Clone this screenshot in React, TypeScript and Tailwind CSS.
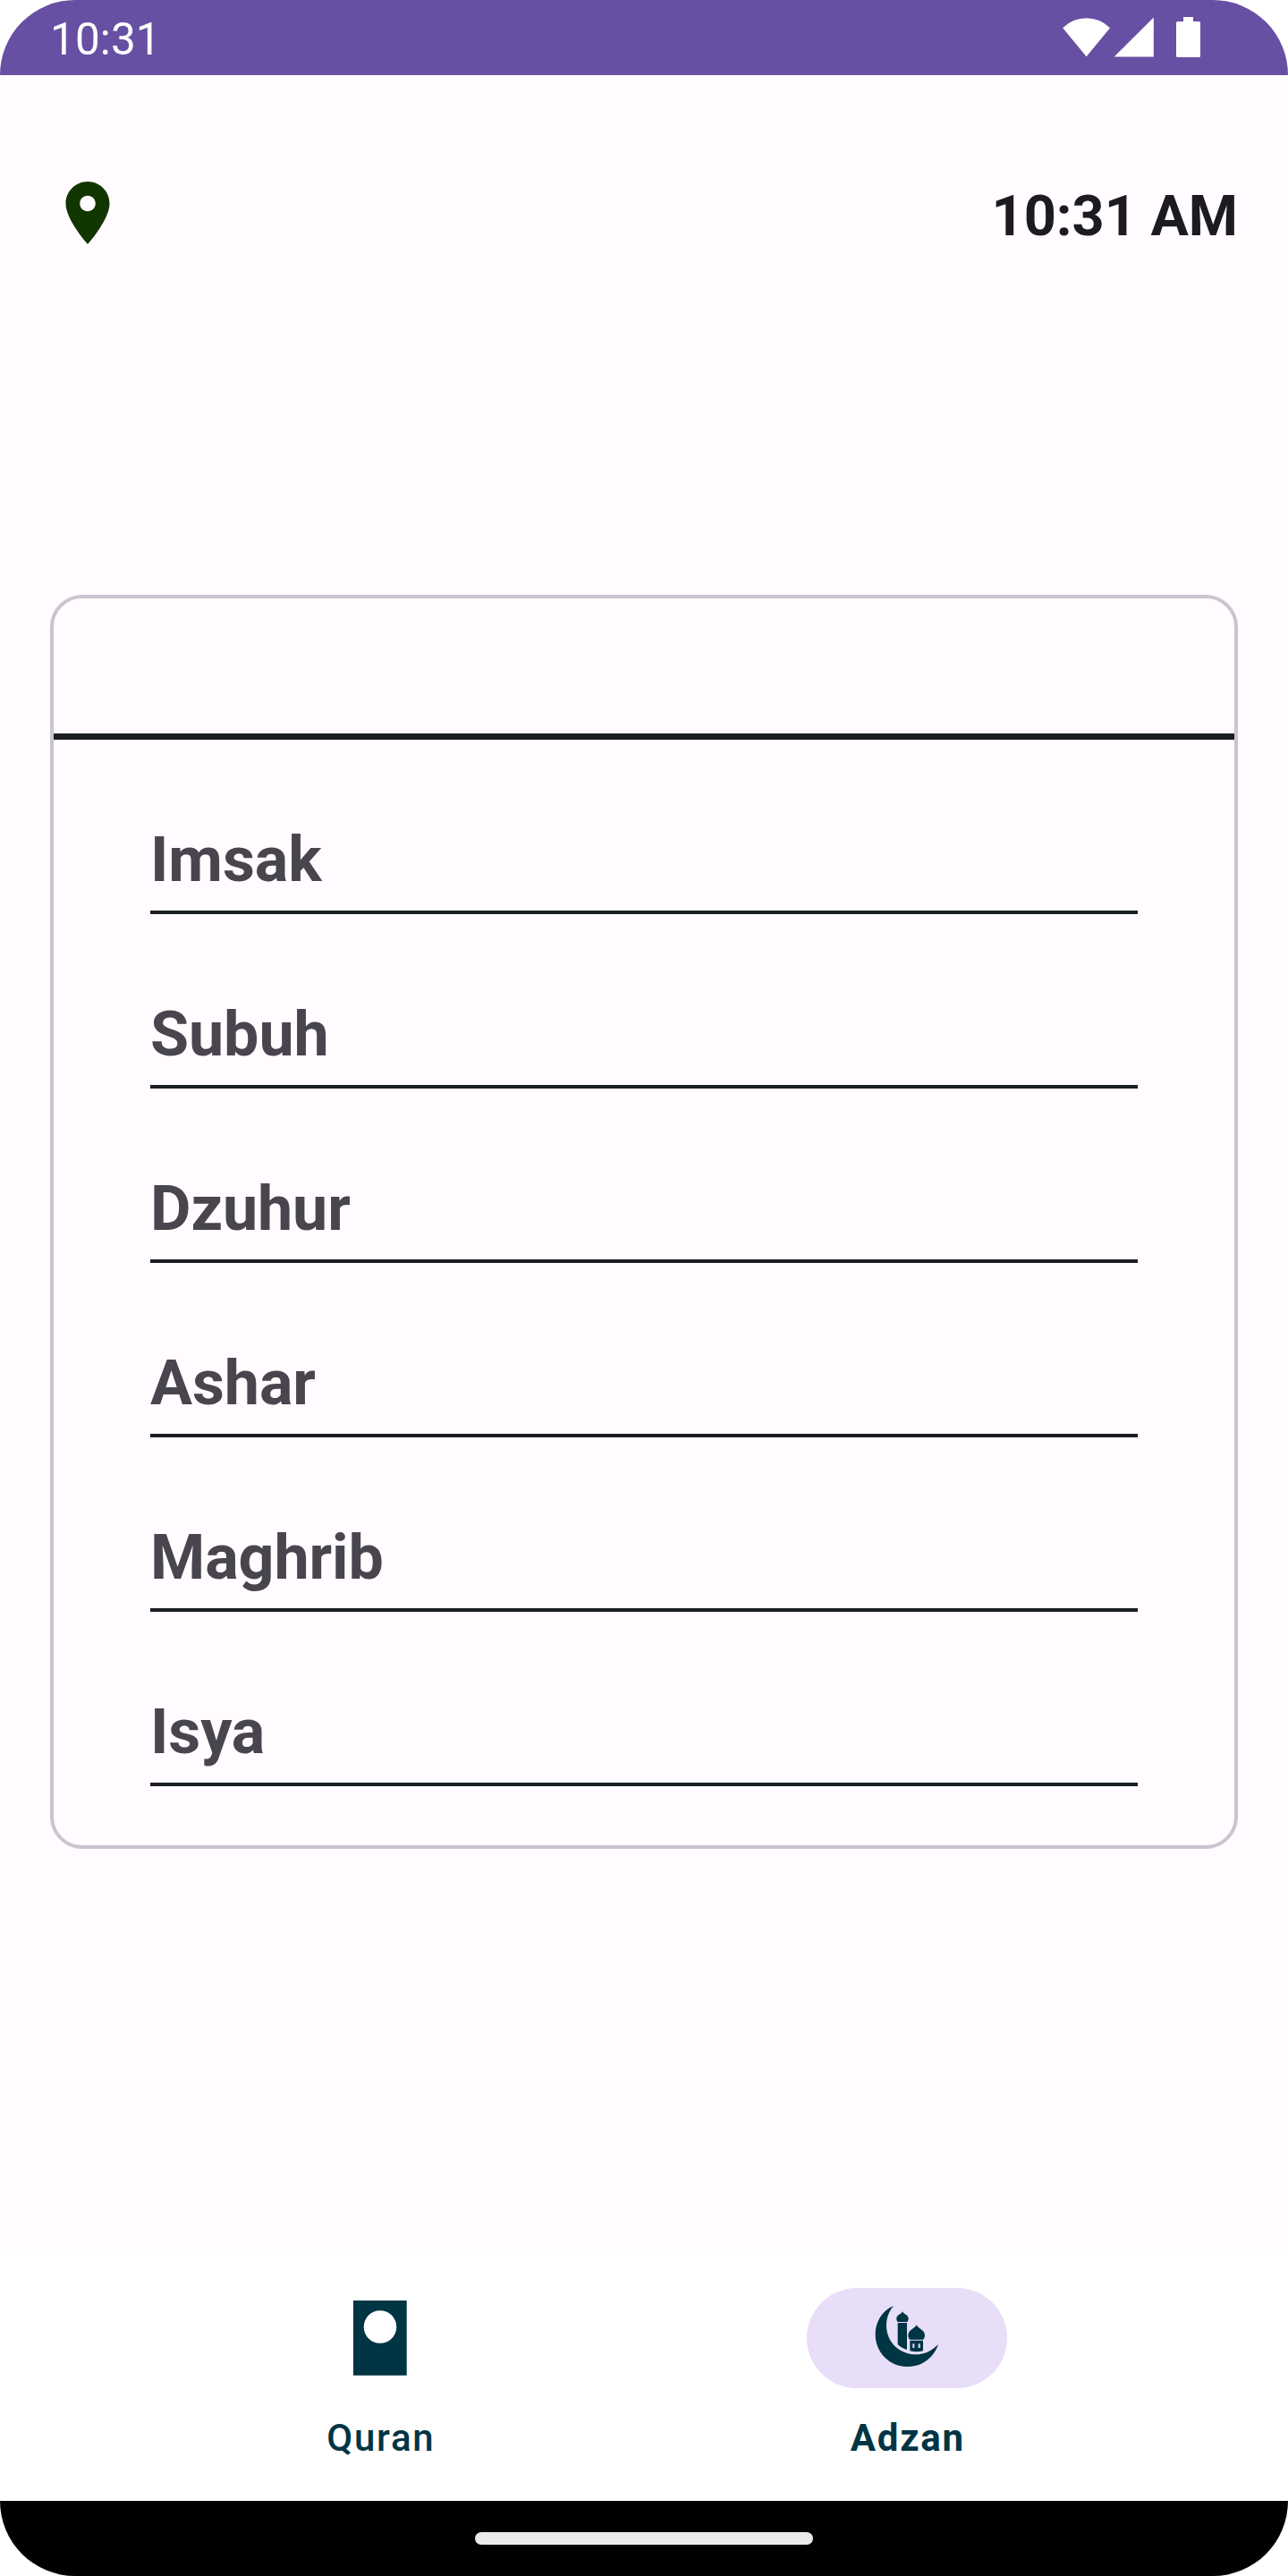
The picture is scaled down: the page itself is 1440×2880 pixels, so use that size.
const prayers = ["Imsak", "Subuh", "Dzuhur", "Ashar", "Maghrib", "Isya"];

function StatusBar() {
  return (
    <header className="flex h-[84px] justify-between rounded-t-[98px] bg-[#6750a3] pl-14 text-white">
      <span className="mt-4 text-[49.5px] leading-[57px] tracking-[0.1px]">10:31</span>
      <svg width="252" height="84" viewBox="1188 0 252 84" fill="currentColor">
        <path d="M1188.2 31.3A37 37 0 0 1 1241 31.3L1214.6 63.3Z" />
        <path d="M1245.6 63.5L1289.8 19.5V63.5Z" />
        <path d="M1323 19h11v5h6.500a1.500 1.500 0 0 1 1.500 1.500v37a1.500 1.500 0 0 1-1.500 1.500h-24a1.500 1.500 0 0 1-1.500-1.500v-37a1.500 1.500 0 0 1 1.500-1.500h6.500Z" />
      </svg>
    </header>
  );
}

function PinIcon() {
  return (
    <svg width="84" height="84" viewBox="0 0 24 24" fill="#123600">
      <path d="M12 2C8.130 2 5 5.130 5 9c0 5.250 7 13 7 13s7-7.750 7-13c0-3.870-3.130-7-7-7zm0 9.500c-1.380 0-2.500-1.120-2.500-2.500s1.120-2.500 2.500-2.500 2.500 1.120 2.500 2.500-1.120 2.500-2.500 2.500z" />
    </svg>
  );
}

function BookIcon() {
  return (
    <svg width="60" height="84" viewBox="0 0 60 84">
      <path fill="#003544" fillRule="evenodd" d="M0 0H59.700V83.700H0ZM30 11.200a18.300 18.300 0 1 0 0 36.600a18.300 18.300 0 1 0 0-36.600Z" />
    </svg>
  );
}

function MosqueIcon() {
  return (
    <svg width="84" height="84" viewBox="96 156 252 252" fill="#003544">
      <path d="M177 174C138 190 116 228 116 270C116 330 164 378 224 378C272 378 312 348 327 303C306 325 280 337 252 337C196 337 153 294 153 240C153 214 162 191 177 174Z" />
      <path d="M207 193C211 202 227 204 227 217C227 222 225 225 223 228H191C188 225 187 222 187 217C187 204 203 202 207 193Z" />
      <path d="M191 231H222V321C210 318 199 311 191 303Z" />
      <path d="M254 238C260 251 282 255 282 272C282 279 279 284 276 287H232C228 284 226 279 226 272C226 255 248 251 254 238Z" />
      <path fillRule="evenodd" d="M232 290H276V325Q254 331 232 325ZM241 301V315H247V301ZM260 301V315H266V301Z" />
    </svg>
  );
}

export default function App() {
  return (
    <div className="h-[2880px] w-[1440px] overflow-hidden bg-white font-['Roboto',sans-serif]">
      <StatusBar />
      <main className="h-[2432px] bg-[#fffbff] px-14 pt-28">
        <div className="flex h-[469px] items-start justify-between">
          <PinIcon />
          <time className="mt-[9px] text-[63px] leading-[74px] font-bold text-[#1c1b1f]">10:31 AM</time>
        </div>
        <section className="h-[1402px] rounded-[36px] border-4 border-[#cac4d0]">
          <div className="h-[158px] border-b-[7px] border-[#1b1f22]" />
          <ul className="px-[108px]">
            {prayers.map((name) => (
              <li key={name} className="flex h-[195px] items-end border-b-4 border-[#1b1f22] pb-4 text-[70px] leading-[82px] font-bold tracking-[-0.1px] text-[#49454f]">
                {name}
              </li>
            ))}
          </ul>
        </section>
      </main>
      <nav className="flex h-[280px] justify-center bg-white pt-[42px] pr-px text-[42px] leading-[49px] tracking-[1.75px] text-[#003544]">
        <div className="flex w-[589px] flex-col items-center gap-[31px] font-medium">
          <span className="flex h-28 w-56 items-center justify-center"><BookIcon /></span>
          <span className="pl-[1.75px]">Quran</span>
        </div>
        <div className="flex w-[589px] flex-col items-center gap-[31px] font-bold">
          <span className="flex h-28 w-56 items-center justify-center rounded-full bg-[#e8def8]"><MosqueIcon /></span>
          <span className="pl-[1.75px]">Adzan</span>
        </div>
      </nav>
      <footer className="flex h-[84px] items-center justify-center rounded-b-[98px] bg-black">
        <div className="h-3.5 w-[378px] rounded-full bg-[#ebebeb]" />
      </footer>
    </div>
  );
}
